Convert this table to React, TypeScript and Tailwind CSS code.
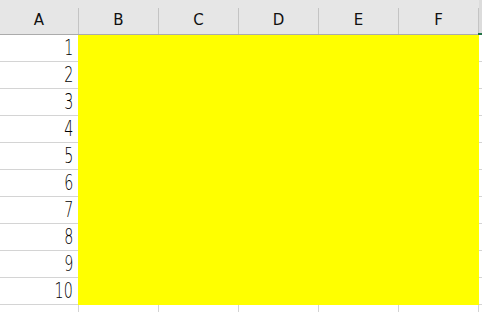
import React from "react";

const columns = ["B", "C", "D", "E", "F"];
const rows = [1, 2, 3, 4, 5, 6, 7, 8, 9, 10];

const font = { fontFamily: '"DejaVu Sans", "Liberation Sans", sans-serif' };

function HeaderCell({ label, width }: { label: string; width: string }) {
  return (
    <div className={`flex h-full ${width}`}>
      <div className="flex flex-1 items-center justify-center pt-[6px]">
        <span className="text-[15px] leading-none text-[#111]">{label}</span>
      </div>
      <div className="mt-[8px] w-[1px] bg-[#c4c4c4]" />
    </div>
  );
}

export default function App() {
  return (
    <div className="relative h-[312px] w-[482px] overflow-hidden bg-white" style={font}>
      {/* column header strip */}
      <div className="relative flex h-[35px] border-b border-[#ababab] bg-[#e6e6e6]">
        <HeaderCell label="A" width="w-[79px]" />
        {columns.map((c) => (
          <HeaderCell key={c} label={c} width="w-[80px]" />
        ))}
        <div className="flex-1 bg-[#dcdcdc]" />
        <div className="absolute left-[478px] top-[33px] h-[2px] w-[4px] bg-[#217346]" />
      </div>

      {/* rows 1-10, B:F filled yellow */}
      {rows.map((r) => (
        <div key={r} className="flex h-[27px]">
          <div className="flex w-[78px] items-end justify-end border-b border-[#d4d4d4] pb-[2px] pr-[5px]">
            <span className="inline-block origin-right scale-x-[0.68] text-[21px] font-extralight leading-none text-black">
              {r}
            </span>
          </div>
          <div className="w-[401px] bg-[#ffff00]" />
          <div className="flex-1 border-b border-[#d4d4d4]" />
        </div>
      ))}

      {/* row 11, partly visible */}
      <div className="flex h-[27px]">
        <div className="w-[78px]" />
        {columns.map((c) => (
          <div key={c} className="w-[80px] border-l border-[#d4d4d4]" />
        ))}
        <div className="flex-1 border-l border-[#d4d4d4]" />
      </div>
    </div>
  );
}
